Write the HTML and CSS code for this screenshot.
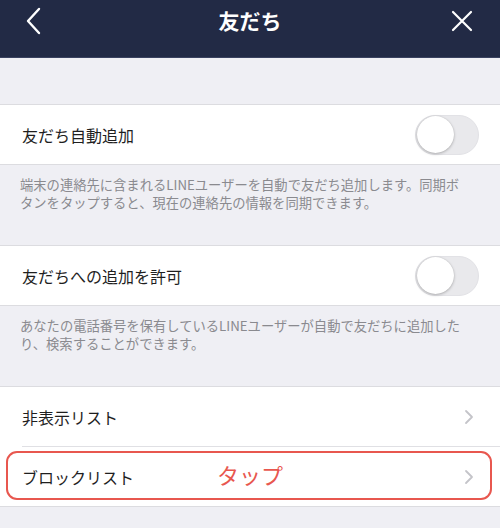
FILE: index.html
```html
<!DOCTYPE html>
<html lang="ja">
<head>
<meta charset="utf-8">
<link rel="stylesheet" href="styles.css">
</head>
<body>
<div class="app">
  <header class="nav">
    <svg class="nav-back" width="20" height="30" viewBox="0 0 20 30"><path d="M15 3 L4 15 L15 27" fill="none" stroke="#fff" stroke-width="2.4" stroke-linecap="round" stroke-linejoin="round"/></svg>
    <div class="nav-title">友だち</div>
    <svg class="nav-close" width="24" height="24" viewBox="0 0 24 24"><path d="M3 3 L21 21 M21 3 L3 21" fill="none" stroke="#fff" stroke-width="2.2" stroke-linecap="round"/></svg>
  </header>
  <div class="spacer"></div>
  <section class="group">
    <div class="row">
      <span class="label">友だち自動追加</span>
      <span class="switch"><span class="knob"></span></span>
    </div>
  </section>
  <p class="desc">端末の連絡先に含まれるLINEユーザーを自動で友だち追加します。同期ボ<br>タンをタップすると、現在の連絡先の情報を同期できます。</p>
  <section class="group">
    <div class="row">
      <span class="label">友だちへの追加を許可</span>
      <span class="switch"><span class="knob"></span></span>
    </div>
  </section>
  <p class="desc">あなたの電話番号を保有しているLINEユーザーが自動で友だちに追加した<br>り、検索することができます。</p>
  <section class="group">
    <div class="row link inset">
      <span class="label">非表示リスト</span>
      <svg class="chev" width="10" height="16" viewBox="0 0 10 16"><path d="M2 2 L8 8 L2 14" fill="none" stroke="#c4c4c9" stroke-width="1.8" stroke-linecap="round" stroke-linejoin="round"/></svg>
    </div>
    <div class="row link">
      <span class="label">ブロックリスト</span>
      <span class="tap">タップ</span>
      <svg class="chev" width="10" height="16" viewBox="0 0 10 16"><path d="M2 2 L8 8 L2 14" fill="none" stroke="#c4c4c9" stroke-width="1.8" stroke-linecap="round" stroke-linejoin="round"/></svg>
      <span class="highlight"></span>
    </div>
  </section>
</div>
</body>
</html>
```
FILE: styles.css
```css
* { box-sizing: border-box; }
html, body { margin: 0; padding: 0; }
body {
  width: 500px;
  height: 528px;
  overflow: hidden;
  background: #efeff4;
  font-family: "Noto Sans CJK JP", "Noto Sans", sans-serif;
}
.app { display: flex; flex-direction: column; }
.nav {
  height: 58px;
  background: #222a45;
  border-bottom: 1px solid #3a4260;
  display: flex;
  align-items: flex-start;
  justify-content: space-between;
  padding: 0 26px 0 24px;
  position: relative;
}
.nav-back { margin-top: 6px; }
.nav-close { margin-top: 9px; }
.nav-title {
  position: absolute;
  left: 0; right: 0; top: 5px;
  text-align: center;
  color: #fff;
  font-size: 21px;
  font-weight: 700;
  line-height: 30px;
}
.spacer { height: 46px; }
.group {
  background: #fff;
  border-top: 1px solid #dcdce0;
  border-bottom: 1px solid #dcdce0;
}
.row {
  height: 59px;
  display: flex;
  align-items: center;
  padding: 0 22px 0 22px;
  position: relative;
}
.label {
  font-size: 16px;
  color: #1f1f1f;
  flex: 1;
}
.switch {
  width: 64px;
  height: 40px;
  border-radius: 20px;
  background: #e9e9ec;
  border: 1px solid #e2e2e6;
  display: flex;
  align-items: center;
  padding: 1px;
  margin-right: -1px;
}
.knob {
  width: 37px;
  height: 37px;
  border-radius: 50%;
  background: #fff;
  box-shadow: 0 1px 3px rgba(0,0,0,0.25), 0 0 1px rgba(0,0,0,0.15);
}
.desc {
  margin: 0;
  padding: 11px 10px 0 20px;
  font-size: 13.3px;
  line-height: 18px;
  color: #8a8a8f;
  height: 80px;
  white-space: nowrap;
}
.link .label { flex: 1; }
.inset::after {
  content: "";
  position: absolute;
  left: 22px; right: 0; bottom: 0;
  border-bottom: 1px solid #e0e0e4;
}
.inset { height: 60px; }
.chev { margin-right: 4px; }
.tap {
  position: absolute;
  left: 217px;
  top: 12px;
  font-size: 22px;
  color: #e8574f;
  line-height: 30px;
}
.highlight {
  position: absolute;
  left: 6px; right: 8px; top: 4px; bottom: 6px;
  border: 2px solid #e8574f;
  border-radius: 11px;
  pointer-events: none;
}
```
